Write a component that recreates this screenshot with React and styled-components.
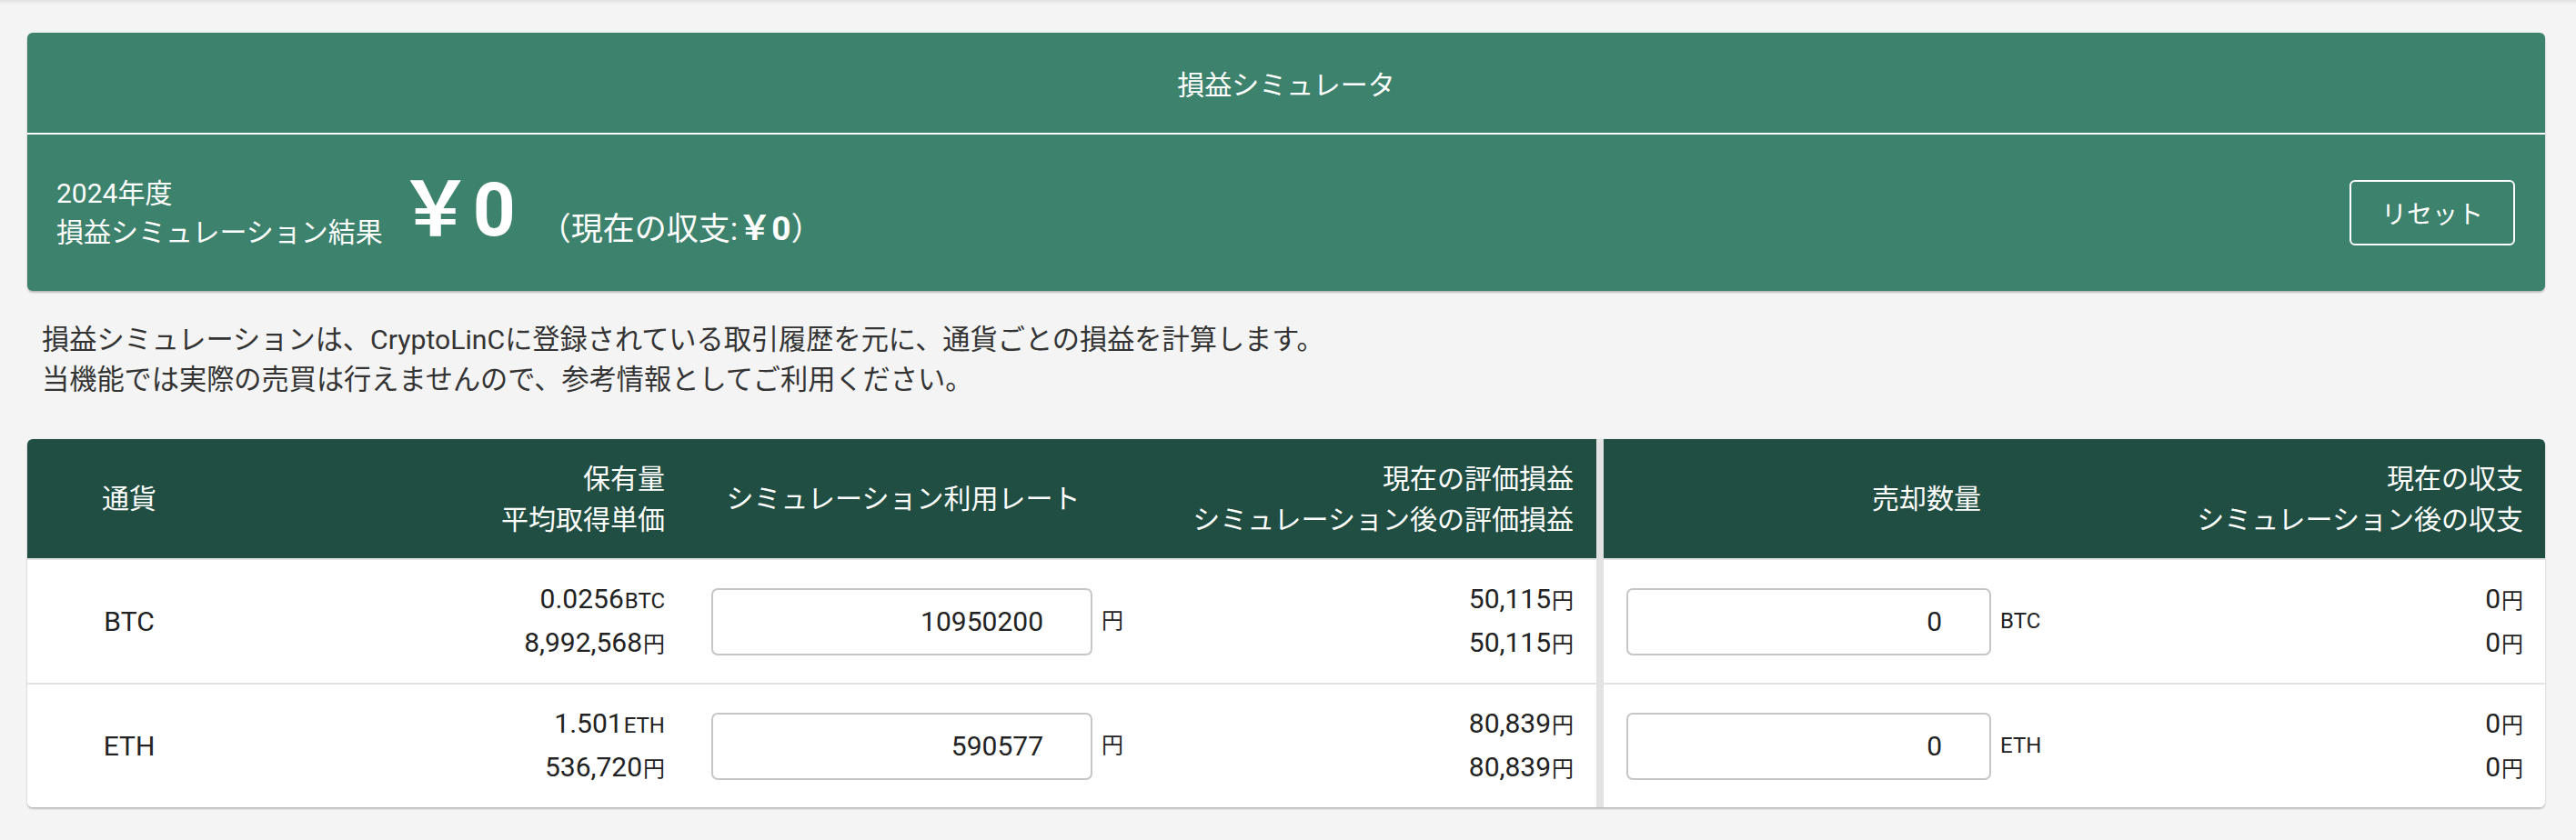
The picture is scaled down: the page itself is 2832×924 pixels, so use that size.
import React from "react";
import styled, { createGlobalStyle } from "styled-components";

const GlobalStyle = createGlobalStyle`
	html, body {
		margin: 0;
		padding: 0;
	}
	body {
		min-height: 100vh;
		background-color: #f4f4f4;
		box-shadow: inset 0 5px 5px -4px rgba(0, 0, 0, 0.12);
		font-family: Roboto, "Noto Sans CJK JP", sans-serif;
		color: #222;
	}
`;

const Page = styled.div`
	padding: 36px 34px 40px 30px;
`;

//summary card
const SummaryCard = styled.section`
	background-color: #3d826c;
	color: #fff;
	border-radius: 6px;
	box-shadow: 0 2px 2px rgba(0, 0, 0, 0.22), 0 0 2px rgba(0, 0, 0, 0.08);
`;

const CardTitle = styled.div`
	height: 110px;
	display: flex;
	align-items: center;
	justify-content: center;
	font-size: 30px;
	border-bottom: 2px solid #fff;
`;

const SummaryBody = styled.div`
	height: 172px;
	display: flex;
	align-items: center;
	justify-content: space-between;
	padding: 0 33px 0 32px;
`;

const ResultGroup = styled.div`
	display: flex;
	align-items: center;
`;

const YearLabel = styled.div`
	font-size: 30px;
	line-height: 43px;
`;

const BigAmount = styled.div`
	margin-left: 17px;
	font-size: 82px;
	font-weight: 700;
	line-height: 80px;
	margin-top: -6px;
`;

const CurrentBalance = styled.div`
	margin-left: 26px;
	margin-top: 36px;
	font-size: 35px;
	line-height: 40px;
	strong {
		font-weight: 700;
		font-size: 37px;
	}
`;

const OutlineButton = styled.button`
	height: 72px;
	padding: 0 33px;
	background: transparent;
	color: #fff;
	border: 2px solid #fff;
	border-radius: 6px;
	font-family: inherit;
	font-size: 28px;
	cursor: pointer;
`;

const Description = styled.p`
	margin: 32px 0 43px;
	padding-left: 16px;
	font-size: 30.2px;
	line-height: 44px;
	color: #333;
`;

//simulator table
const TableCard = styled.div`
	background-color: #fff;
	border-radius: 6px;
	overflow: hidden;
	box-shadow: 0 2px 2px rgba(0, 0, 0, 0.22), 0 0 2px rgba(0, 0, 0, 0.08);
`;

const Row = styled.div`
	display: grid;
	grid-template-columns: 224px 501px 476px 524px 718px 1fr;
	box-sizing: border-box;
	height: ${(p) => (p.$head ? "131px" : "137px")};
	background-color: ${(p) => (p.$head ? "#214e42" : "#fff")};
	color: ${(p) => (p.$head ? "#fff" : "#222")};
	border-top: ${(p) => (p.$head ? "none" : "2px solid #e2e2e2")};
`;

const Cell = styled.div`
	box-sizing: border-box;
	min-width: 0;
	display: flex;
	flex-direction: column;
	justify-content: center;
	align-items: ${(p) =>
		p.$align === "right" ? "flex-end" : p.$align === "center" ? "center" : "flex-start"};
	text-align: ${(p) => p.$align || "left"};
	padding: ${(p) => p.$pad || "0"};
	border-left: ${(p) => (p.$divider ? "8px solid #e2e2e2" : "none")};
	font-size: 30px;
	line-height: 45px;
	white-space: nowrap;
`;

const InputCell = styled(Cell)`
	flex-direction: row;
	justify-content: flex-start;
	align-items: center;
`;

const NumberInput = styled.input`
	box-sizing: border-box;
	width: ${(p) => p.$width}px;
	height: 74px;
	padding: 0 52px 0 16px;
	border: 2px solid #c6c6c6;
	border-radius: 7px;
	background: #fff;
	text-align: right;
	font-family: inherit;
	font-size: 30px;
	color: #222;
	outline: none;
`;

const Unit = styled.span`
	font-size: 24px;
	margin-left: ${(p) => (p.$gap ? "10px" : "1px")};
`;

const rows = [
	{
		code: "BTC",
		amount: "0.0256",
		avg: "8,992,568",
		rate: "10950200",
		current: "50,115",
		after: "50,115",
		sell: "0",
		balance: "0",
		balanceAfter: "0",
	},
	{
		code: "ETH",
		amount: "1.501",
		avg: "536,720",
		rate: "590577",
		current: "80,839",
		after: "80,839",
		sell: "0",
		balance: "0",
		balanceAfter: "0",
	},
];

export default () => (
	<>
		<GlobalStyle />
		<Page>
			<SummaryCard>
				<CardTitle>損益シミュレータ</CardTitle>
				<SummaryBody>
					<ResultGroup>
						<YearLabel>
							2024年度
							<br />
							損益シミュレーション結果
						</YearLabel>
						<BigAmount>￥0</BigAmount>
						<CurrentBalance>
							（現在の収支:<strong>￥0</strong>）
						</CurrentBalance>
					</ResultGroup>
					<OutlineButton>リセット</OutlineButton>
				</SummaryBody>
			</SummaryCard>

			<Description>
				損益シミュレーションは、CryptoLinCに登録されている取引履歴を元に、通貨ごとの損益を計算します。
				<br />
				当機能では実際の売買は行えませんので、参考情報としてご利用ください。
			</Description>

			<TableCard>
				<Row $head>
					<Cell $align="center">通貨</Cell>
					<Cell $align="right" $pad="0 24px 0 0">
						<div>保有量</div>
						<div>平均取得単価</div>
					</Cell>
					<Cell $align="center">シミュレーション利用レート</Cell>
					<Cell $align="right" $pad="0 25px 0 0">
						<div>現在の評価損益</div>
						<div>シミュレーション後の評価損益</div>
					</Cell>
					<Cell $align="center" $divider>
						売却数量
					</Cell>
					<Cell $align="right" $pad="0 24px 0 0">
						<div>現在の収支</div>
						<div>シミュレーション後の収支</div>
					</Cell>
				</Row>
				{rows.map((r) => (
					<Row key={r.code}>
						<Cell $align="center">{r.code}</Cell>
						<Cell $align="right" $pad="0 24px 0 0">
							<div>
								{r.amount}
								<Unit>{r.code}</Unit>
							</div>
							<div>
								{r.avg}
								<Unit>円</Unit>
							</div>
						</Cell>
						<InputCell $pad="0 0 0 27px">
							<NumberInput $width={419} defaultValue={r.rate} inputMode="numeric" />
							<Unit $gap>円</Unit>
						</InputCell>
						<Cell $align="right" $pad="0 25px 0 0">
							<div>
								{r.current}
								<Unit>円</Unit>
							</div>
							<div>
								{r.after}
								<Unit>円</Unit>
							</div>
						</Cell>
						<InputCell $pad="0 0 0 25px" $divider>
							<NumberInput $width={401} defaultValue={r.sell} inputMode="numeric" />
							<Unit $gap>{r.code}</Unit>
						</InputCell>
						<Cell $align="right" $pad="0 24px 0 0">
							<div>
								{r.balance}
								<Unit>円</Unit>
							</div>
							<div>
								{r.balanceAfter}
								<Unit>円</Unit>
							</div>
						</Cell>
					</Row>
				))}
			</TableCard>
		</Page>
	</>
);
